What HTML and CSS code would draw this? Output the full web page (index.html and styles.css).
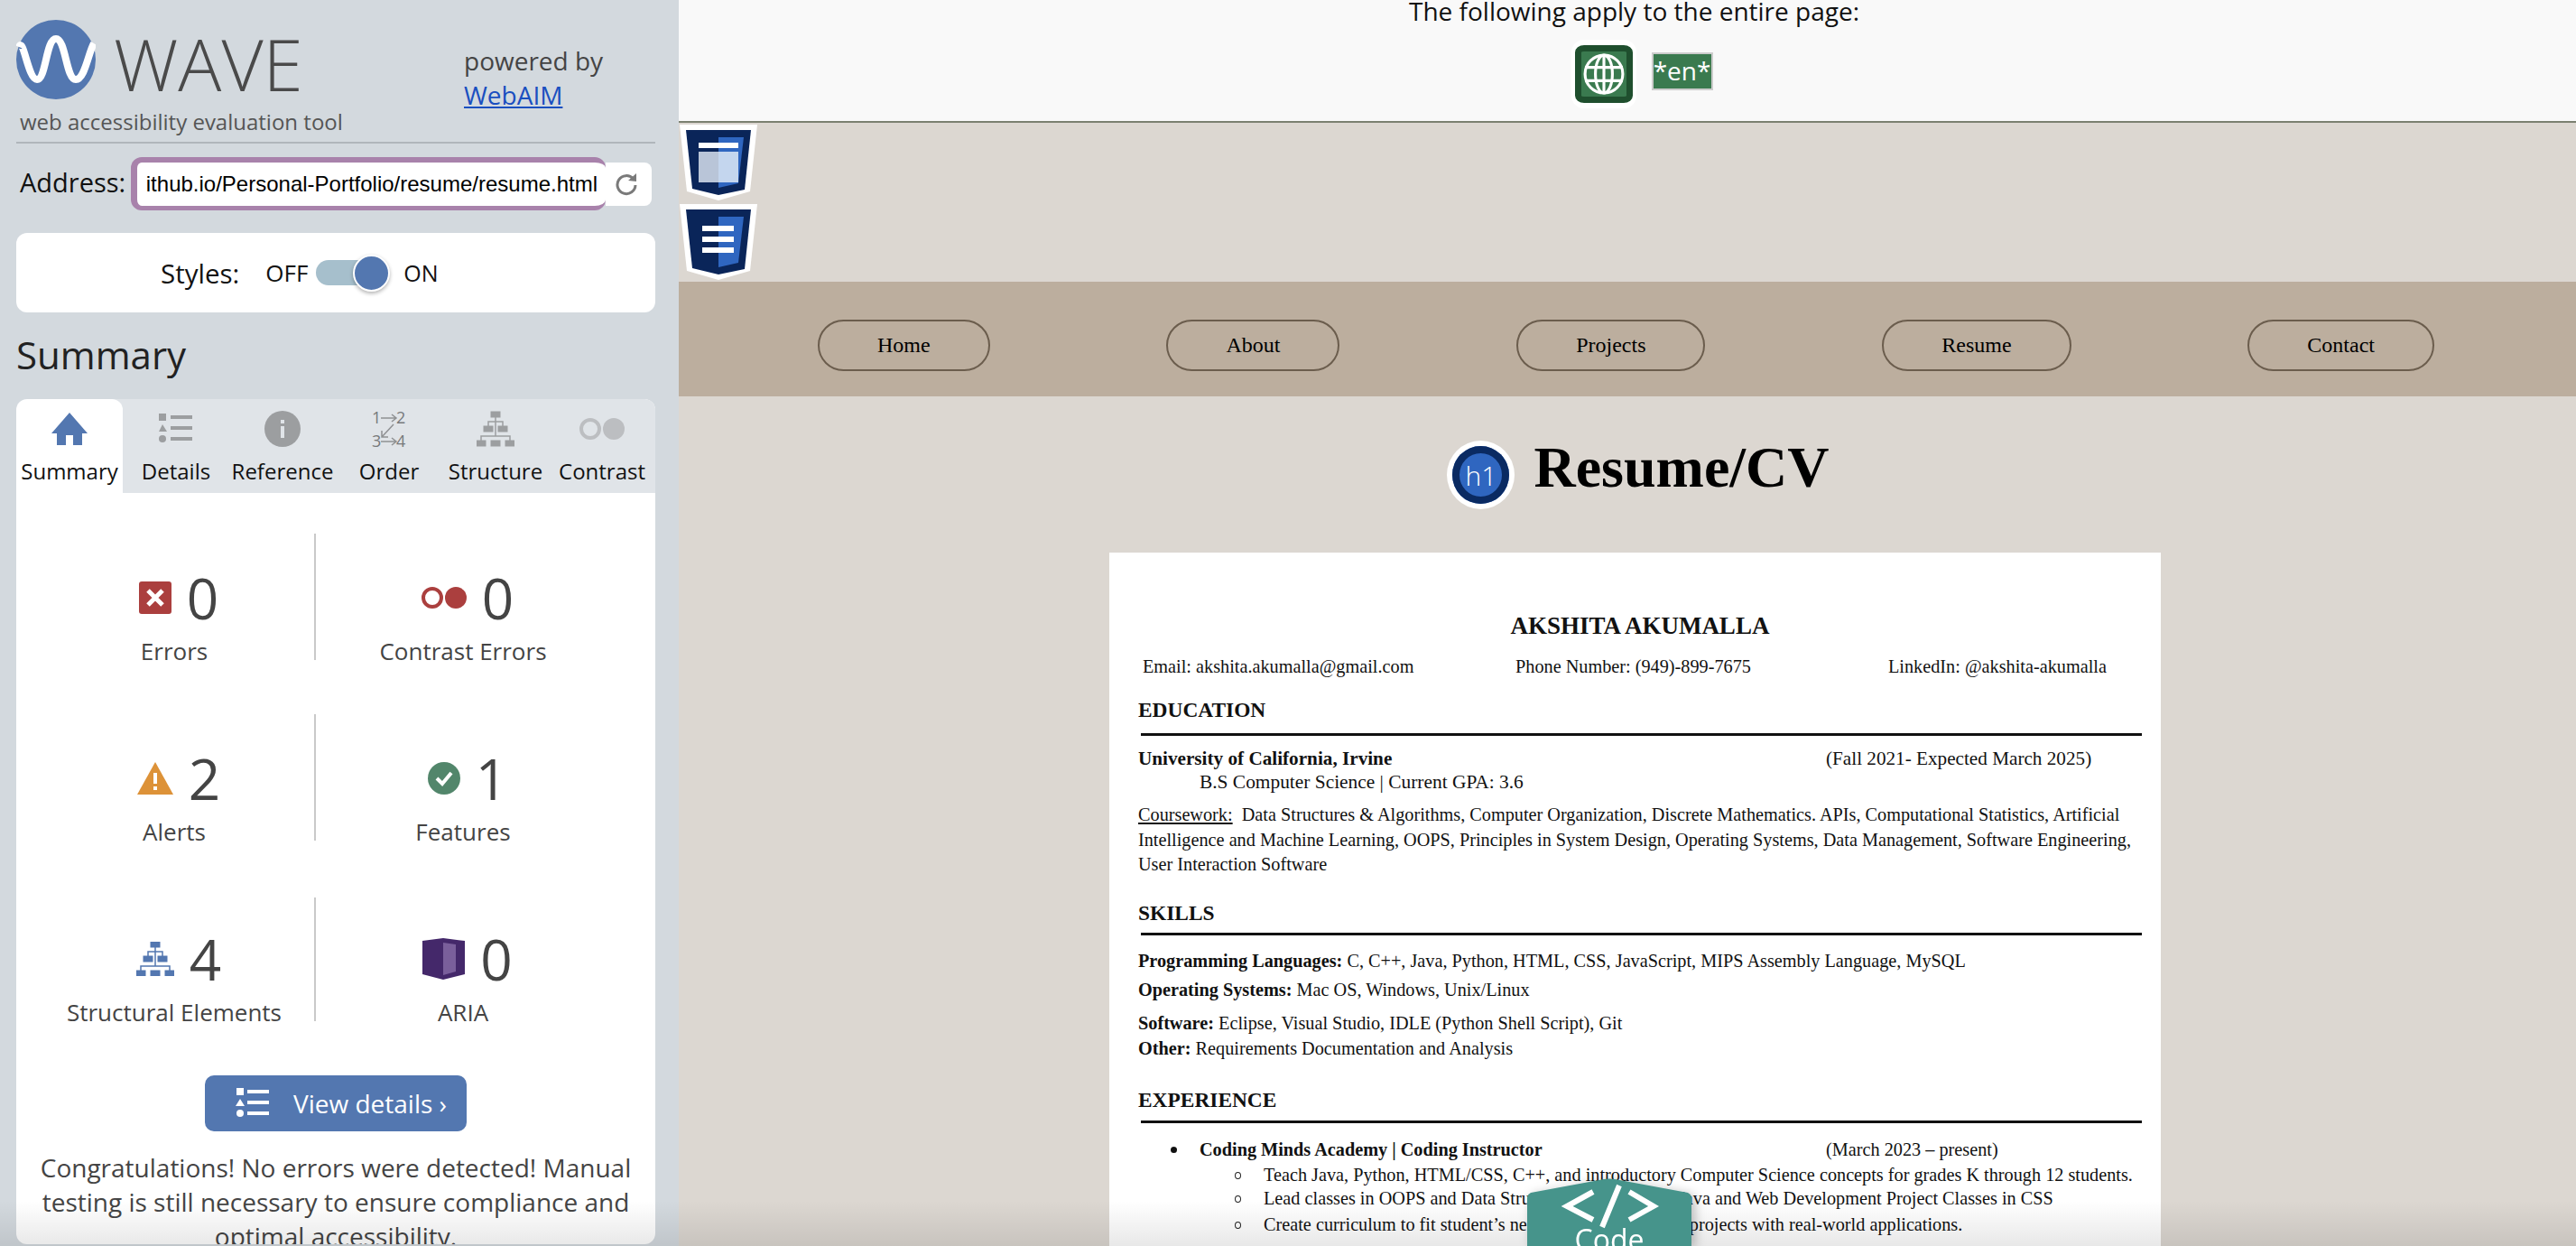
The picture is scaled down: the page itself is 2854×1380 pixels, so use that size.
FILE: index.html
```html
<!DOCTYPE html>
<html lang="en">
<head>
  <meta charset="UTF-8" />
  <title>WAVE Report of Resume/CV</title>
  <link rel="stylesheet" href="styles.css">
</head>
<body>
  <svg class="icon-defs" width="0" height="0">
    <defs>
      <g id="tree">
        <rect x="16" y="0" width="10" height="6"/><rect x="8" y="16" width="10" height="6"/><rect x="24" y="16" width="10" height="6"/>
        <rect x="0" y="32" width="10" height="6"/><rect x="16" y="32" width="10" height="6"/><rect x="32" y="32" width="10" height="6"/>
        <path d="M21 6V11M13 16V11H29V16M21 11V27M5 32V27H37V32" fill="none" stroke-width="1.5"/>
      </g>
    </defs>
  </svg>

  <aside class="sidebar">
    <header class="brand">
      <div>
        <div class="brand-row">
          <svg class="logo" viewBox="0 0 88 88" width="88" height="88">
            <circle cx="44" cy="44" r="44" fill="#5377b0"/>
            <path d="M3 30C8 18 13 66 23 66C33 66 33 21 44 21C55 21 55 66 66 66C76 66 80 36 86 26" fill="none" stroke="#fff" stroke-width="8"/>
          </svg>
          <div class="wave-title">WAVE</div>
        </div>
        <div class="tagline">web accessibility evaluation tool</div>
      </div>
      <div class="powered">powered by<br><a href="#">WebAIM</a></div>
    </header>

    <div class="address">
      <label class="address-label">Address:</label>
      <div class="address-input"><div class="address-clip"><span>akshita-akumalla.github.io/Personal-Portfolio/resume/resume.html</span></div></div>
      <button class="reload" title="Reload">
        <svg viewBox="0 0 26 26" width="26" height="26">
          <path d="M20.5 7A10 10 0 1 0 23 14" fill="none" stroke="#7a7a7a" stroke-width="3"/>
          <path d="M15 9L24 10L24 1Z" fill="#7a7a7a"/>
        </svg>
      </button>
    </div>

    <div class="styles-box">
      <span class="styles-label">Styles:</span>
      <span class="off">OFF</span>
      <span class="toggle"><span class="toggle-knob"></span></span>
      <span class="on">ON</span>
    </div>

    <h2 class="summary-title">Summary</h2>

    <section class="panel">
      <nav class="tabs">
        <div class="tab active">
          <svg viewBox="0 0 40 36" width="40" height="36"><path d="M20 0L40 23H34V36H24V25H16V36H6V23H0Z" fill="#5377b0"/></svg>
          <span>Summary</span>
        </div>
        <div class="tab">
          <svg viewBox="0 0 38 34" width="38" height="34" fill="#9c9ea0"><rect x="0" y="0" width="8" height="8"/><rect x="13" y="2" width="24" height="4"/><path d="M4 12L9 20H0Z"/><rect x="13" y="14" width="24" height="4"/><circle cx="4" cy="28" r="4"/><rect x="13" y="26" width="24" height="4"/></svg>
          <span>Details</span>
        </div>
        <div class="tab">
          <svg viewBox="0 0 40 40" width="40" height="40"><circle cx="20" cy="20" r="20" fill="#9c9ea0"/><rect x="18" y="17" width="4" height="13" fill="#e0e4e8"/><rect x="18" y="10" width="4" height="4" fill="#e0e4e8"/></svg>
          <span>Reference</span>
        </div>
        <div class="tab">
          <svg viewBox="0 0 38 40" width="38" height="40" fill="none" stroke="#8f9193" stroke-width="1.5">
            <text x="0" y="14" class="order-num">1</text><text x="27" y="14" class="order-num">2</text>
            <path d="M10 8H26M22 4L27 8L22 12"/>
            <path d="M24 15L11 29M11 22V29H18"/>
            <text x="0" y="40" class="order-num">3</text><text x="27" y="40" class="order-num">4</text>
            <path d="M10 34H26M22 30L27 34L22 38"/>
          </svg>
          <span>Order</span>
        </div>
        <div class="tab">
          <svg viewBox="0 0 42 38" width="42" height="38"><use href="#tree" fill="#9c9ea0" stroke="#9c9ea0"/></svg>
          <span>Structure</span>
        </div>
        <div class="tab">
          <svg viewBox="0 0 50 24" width="50" height="24"><circle cx="12" cy="12" r="10" fill="none" stroke="#bcbec1" stroke-width="4"/><circle cx="38" cy="12" r="12" fill="#bcbec1"/></svg>
          <span>Contrast</span>
        </div>
      </nav>

      <div class="stats">
        <div class="stat">
          <div class="stat-top">
            <svg viewBox="0 0 36 36" width="36" height="36"><rect width="36" height="36" rx="3" fill="#ab3f3e"/><path d="M10 10L26 26M26 10L10 26" stroke="#fff" stroke-width="5"/></svg>
            <span class="num">0</span>
          </div>
          <div class="stat-label">Errors</div>
        </div>
        <div class="stat">
          <div class="stat-top">
            <svg viewBox="0 0 50 24" width="50" height="24"><circle cx="12" cy="12" r="10" fill="none" stroke="#ab3f3e" stroke-width="4"/><circle cx="38" cy="12" r="12" fill="#ab3f3e"/></svg>
            <span class="num">0</span>
          </div>
          <div class="stat-label">Contrast Errors</div>
        </div>
        <div class="stat">
          <div class="stat-top">
            <svg viewBox="0 0 40 36" width="40" height="36"><path d="M20 0L40 36H0Z" fill="#dd9238"/><rect x="18" y="12" width="4" height="12" fill="#fff"/><rect x="18" y="27" width="4" height="4" fill="#fff"/></svg>
            <span class="num">2</span>
          </div>
          <div class="stat-label">Alerts</div>
        </div>
        <div class="stat">
          <div class="stat-top">
            <svg viewBox="0 0 36 36" width="36" height="36"><circle cx="18" cy="18" r="18" fill="#52866b"/><path d="M10 18L16 24L26 12" fill="none" stroke="#fff" stroke-width="4"/></svg>
            <span class="num">1</span>
          </div>
          <div class="stat-label">Features</div>
        </div>
        <div class="stat stat-last">
          <div class="stat-top">
            <svg viewBox="0 0 42 38" width="42" height="38"><use href="#tree" fill="#5377b0" stroke="#5377b0"/></svg>
            <span class="num">4</span>
          </div>
          <div class="stat-label">Structural Elements</div>
        </div>
        <div class="stat stat-last">
          <div class="stat-top">
            <svg viewBox="0 0 47 46" width="47" height="46"><path d="M0 3L23 0L47 3V40L23 46L0 40Z" fill="#44286a"/><path d="M23 5L37 7V37L23 41Z" fill="#7a5f9b"/></svg>
            <span class="num">0</span>
          </div>
          <div class="stat-label">ARIA</div>
        </div>
      </div>

      <a class="view-details" href="#">
        <svg viewBox="0 0 38 34" width="38" height="34" fill="#fff"><rect x="1" y="0" width="8" height="8"/><rect x="13" y="2" width="24" height="4"/><path d="M5 12L10 20H0Z"/><rect x="13" y="14" width="24" height="4"/><circle cx="5" cy="28" r="4"/><rect x="13" y="26" width="24" height="4"/></svg>
        <span>View details ›</span>
      </a>

      <p class="congrats">Congratulations! No errors were detected! Manual<br>testing is still necessary to ensure compliance and<br>optimal accessibility.</p>
    </section>
  </aside>

  <main class="page">
    <div class="page-notes">
      <div class="notes-title">The following apply to the entire page:</div>
      <div class="notes-icons">
        <span class="globe-badge">
          <svg viewBox="0 0 44 44" width="46" height="46" fill="none" stroke="#fff" stroke-width="3"><circle cx="22" cy="22" r="20"/><ellipse cx="22" cy="22" rx="9" ry="20"/><path d="M22 2V42M2 15H42M2 29H42"/></svg>
        </span>
        <span class="lang-badge">*en*</span>
      </div>
    </div>

    <svg class="shield" viewBox="0 0 86 84" width="86" height="84">
      <path d="M0 0H86L78 74L43 84L8 74Z" fill="#fff"/>
      <path d="M7 6H79L72 72L43 78L14 71Z" fill="#0a2559"/>
      <path d="M43 14H71L65 65L43 70Z" fill="#2f66c0"/>
      <rect x="21" y="20" width="44" height="6" fill="#fff"/>
      <rect x="21" y="30" width="22" height="34" fill="#b9c5d8"/>
      <rect x="43" y="30" width="22" height="34" fill="#c4d6ee"/>
    </svg>
    <svg class="shield shield-next" viewBox="0 0 86 84" width="86" height="84">
      <path d="M0 0H86L78 74L43 84L8 74Z" fill="#fff"/>
      <path d="M7 6H79L72 72L43 78L14 71Z" fill="#0a2559"/>
      <path d="M43 14H71L65 65L43 70Z" fill="#2f66c0"/>
      <rect x="25" y="24" width="35" height="6" fill="#fff"/>
      <rect x="25" y="36" width="35" height="6" fill="#fff"/>
      <rect x="25" y="48" width="35" height="6" fill="#fff"/>
    </svg>

    <nav class="site-nav">
      <a href="#">Home</a>
      <a href="#">About</a>
      <a href="#">Projects</a>
      <a href="#">Resume</a>
      <a href="#">Contact</a>
    </nav>

    <div class="page-heading">
      <span class="h1-badge"><span class="h1-badge-inner">h1</span></span>
      <h1>Resume/CV</h1>
    </div>

    <article class="resume">
      <div class="res-name">AKSHITA AKUMALLA</div>
      <div class="res-contact">
        <span>Email: akshita.akumalla@gmail.com</span>
        <span>Phone Number: (949)-899-7675</span>
        <span>LinkedIn: @akshita-akumalla</span>
      </div>
      <div class="res-head head-edu">EDUCATION</div>
      <div class="res-rule rule-edu"></div>
      <div class="res-line dated school gap-12"><b>University of California, Irvine</b><span>(Fall 2021- Expected March 2025)</span></div>
      <div class="res-line indent">B.S Computer Science | Current GPA: 3.6</div>
      <p class="res-para"><u>Coursework:</u>&nbsp; Data Structures &amp; Algorithms, Computer Organization, Discrete Mathematics. APIs, Computational Statistics, Artificial<br>Intelligence and Machine Learning, OOPS, Principles in System Design, Operating Systems, Data Management, Software Engineering,<br>User Interaction Software</p>
      <div class="res-head head-skills">SKILLS</div>
      <div class="res-rule rule-skills"></div>
      <div class="res-line gap-15"><b>Programming Languages:</b> C, C++, Java, Python, HTML, CSS, JavaScript, MIPS Assembly Language, MySQL</div>
      <div class="res-line gap-6"><b>Operating Systems:</b> Mac OS, Windows, Unix/Linux</div>
      <div class="res-line gap-11"><b>Software:</b> Eclipse, Visual Studio, IDLE (Python Shell Script), Git</div>
      <div class="res-line gap-2"><b>Other:</b> Requirements Documentation and Analysis</div>
      <div class="res-head head-exp">EXPERIENCE</div>
      <div class="res-rule rule-exp"></div>
      <div class="res-line dated job"><b>Coding Minds Academy | Coding Instructor</b><span>(March 2023 – present)</span></div>
      <div class="res-line duty gap-2">Teach Java, Python, HTML/CSS, C++, and introductory Computer Science concepts for grades K through 12 students.</div>
      <div class="res-line duty">Lead classes in OOPS and Data Structures, as well as in Java and Web Development Project Classes in CSS</div>
      <div class="res-line duty gap-3">Create curriculum to fit student’s needs and create unique projects with real-world applications.</div>
    </article>
  </main>

  <div class="bottom-fade"></div>

  <div class="code-tab">
    <svg viewBox="0 0 182 75" width="182" height="75">
      <path d="M0 22Q0 18 4 16L85 1Q91 0 97 1L178 16Q182 18 182 22V75H0Z" fill="#46948b"/>
      <path d="M73 15L44 31L73 46M113 15L140 31L113 46M102 8L83 54" fill="none" stroke="#fff" stroke-width="6"/>
    </svg>
    <span class="code-label">Code</span>
  </div>
</body>
</html>
```

FILE: styles.css
```css
body {
  margin: 0;
  height: 1380px;
  overflow: hidden;
  display: flex;
  position: relative;
  font-family: "Open Sans", sans-serif;
  color: #444;
  background-color: #dcd7d1;
}

.icon-defs {
  position: absolute;
}

/* left panel */
.sidebar {
  width: 752px;
  flex: 0 0 752px;
  height: 1380px;
  background-color: #d3d9de;
}

.brand {
  display: grid;
  grid-template-columns: 496px 1fr;
  height: 159px;
  box-sizing: border-box;
  margin: 0 26px 0 18px;
  border-bottom: 2px solid #b0b6bb;
}

.brand-row {
  display: flex;
  padding-top: 22px;
}

.logo {
  flex: none;
}

.wave-title {
  font-size: 80px;
  font-weight: 300;
  line-height: 88px;
  margin: 4px 0 0 20px;
  color: #4a4a4a;
}

.tagline {
  font-size: 24px;
  line-height: 30px;
  margin: 6px 0 0 4px;
  color: #555;
  white-space: nowrap;
}

.powered {
  font-size: 28px;
  line-height: 38px;
  padding-top: 48px;
}

.powered a {
  color: #1a4fc0;
}

.address {
  display: flex;
  align-items: center;
  margin: 15px 0 0 22px;
}

.address-label {
  width: 123px;
  font-size: 29px;
  color: #111;
  margin-bottom: 5px;
}

.address-input {
  box-sizing: border-box;
  width: 526px;
  height: 59px;
  display: flex;
  align-items: center;
  padding: 0 9px 0 9px;
  background: #fff;
  border: 6px solid #a882ab;
  border-width: 6px 0 5px 7px;
  border-radius: 12px;
  font-family: "Liberation Sans", sans-serif;
  font-size: 24px;
  color: #000;
}

.address-clip {
  flex: 1;
  display: flex;
  justify-content: flex-end;
  overflow: hidden;
  white-space: nowrap;
}

.address-clip span {
  flex: none;
}

.reload {
  width: 51px;
  height: 48px;
  padding: 0 5px 0 0;
  border: none;
  border-radius: 0 8px 8px 0;
  background: #fff;
  display: flex;
  align-items: center;
  justify-content: center;
}

.styles-box {
  display: flex;
  align-items: center;
  height: 88px;
  margin: 25px 26px 0 18px;
  padding-left: 160px;
  background: #fff;
  border-radius: 12px;
  color: #111;
}

.styles-label {
  font-size: 29.5px;
  margin-right: 29px;
}

.off {
  font-size: 26px;
}

.on {
  font-size: 25px;
}

.toggle {
  position: relative;
  width: 82px;
  height: 40px;
  margin: 0 15px 0 9px;
}

.toggle::before {
  content: "";
  position: absolute;
  left: 0;
  top: 6px;
  width: 72px;
  height: 28px;
  border-radius: 14px;
  background: #a6bfcc;
}

.toggle-knob {
  position: absolute;
  right: 0;
  top: 0;
  box-sizing: border-box;
  width: 41px;
  height: 41px;
  border-radius: 50%;
  background: #5377b0;
  border: 2px solid #fff;
  box-shadow: 0 2px 4px rgba(0, 0, 0, 0.3);
}

.summary-title {
  font-size: 42px;
  font-weight: 400;
  line-height: 56px;
  margin: 19px 0 21px 18px;
  color: #222;
}

.panel {
  width: 708px;
  height: 936px;
  margin-left: 18px;
  background: #fff;
  border-radius: 12px;
  overflow: hidden;
}

.tabs {
  display: grid;
  grid-template-columns: repeat(6, 118px);
  height: 104px;
  background: #e0e4e8;
}

.tab {
  display: flex;
  flex-direction: column;
  align-items: center;
  justify-content: flex-start;
  font-size: 24px;
  color: #111;
}

.tab svg {
  height: 44px;
  margin-top: 11px;
}

.tab span {
  line-height: 34px;
  margin-top: 8px;
}

.tab.active {
  background: #fff;
  border-radius: 12px 12px 0 0;
}

.order-num {
  font-family: "Open Sans", sans-serif;
  font-size: 18px;
  fill: #77797b;
  stroke: none;
}

.stats {
  display: grid;
  grid-template-columns: 312px 326px;
  grid-auto-rows: 140px;
  row-gap: 60px;
  margin: 45px 0 0 20px;
}

.stat {
  box-sizing: border-box;
  padding-top: 40px;
  text-align: center;
}

.stat:nth-child(odd) {
  border-right: 2px solid #c9c9c9;
}

.stat-last {
  margin-top: 3px;
  padding-top: 37px;
}

.stat-top {
  display: flex;
  justify-content: center;
  align-items: center;
  gap: 17px;
  height: 62px;
  margin-left: 10px;
}

.num {
  font-size: 62px;
  line-height: 62px;
  font-weight: 400;
  color: #444;
}

.stat-label {
  font-size: 26px;
  line-height: 32px;
  margin-top: 12px;
  color: #444;
  white-space: nowrap;
}

.view-details {
  display: flex;
  align-items: center;
  gap: 26px;
  box-sizing: border-box;
  width: 290px;
  height: 62px;
  margin: 60px 0 0 209px;
  padding-left: 34px;
  border-radius: 10px;
  background: #5377b0;
  color: #fff;
  font-size: 28px;
  text-decoration: none;
}

.congrats {
  margin: 21px 0 0;
  font-size: 28px;
  line-height: 38px;
  text-align: center;
  color: #444;
  white-space: nowrap;
}

/* report area on the right */
.page {
  flex: 1;
  height: 1380px;
  overflow: hidden;
}

.page-notes {
  height: 134px;
  overflow: hidden;
  background: #f9f9f9;
  border-bottom: 2px solid #7b8070;
  text-align: center;
  color: #111;
}

.notes-title {
  font-size: 28px;
  line-height: 40px;
  margin-top: -8px;
  padding: 0 0 0 15px;
}

.notes-icons {
  display: flex;
  justify-content: center;
  align-items: flex-start;
  gap: 17px;
  padding-left: 32px;
  margin-top: 12px;
}

.globe-badge {
  display: flex;
  align-items: center;
  justify-content: center;
  box-sizing: border-box;
  width: 72px;
  height: 76px;
  border: solid #fff;
  border-width: 6px 4px;
  border-radius: 14px;
  background: #3a7a4f;
  box-shadow: inset 0 0 0 7px #1f4f2e;
}

.lang-badge {
  box-sizing: border-box;
  width: 68px;
  height: 42px;
  margin-top: 14px;
  background: #3a7a4f;
  border: 2px solid #ccc;
  color: #fff;
  font-size: 28px;
  line-height: 36px;
}

.shield {
  display: block;
  margin: 2px 0 0 1px;
}

.shield-next {
  margin-top: 4px;
}

.site-nav {
  display: flex;
  justify-content: space-between;
  align-items: center;
  box-sizing: border-box;
  height: 127px;
  margin-top: 2px;
  padding: 13px 157px 0 154px;
  background: #bcae9e;
}

.site-nav a {
  display: block;
  padding: 0 64px;
  border: 2px solid #6b5d4d;
  border-radius: 29px;
  font-family: "Liberation Serif", serif;
  font-size: 24px;
  line-height: 53px;
  color: #000;
  text-decoration: none;
}

.page-heading {
  display: flex;
  justify-content: center;
  align-items: center;
  gap: 21px;
  height: 76px;
  margin-top: 49px;
  padding-left: 24px;
}

.page-heading h1 {
  margin: 0 0 16px;
  font-family: "Liberation Serif", serif;
  font-size: 64px;
  font-weight: bold;
  color: #000;
}

.h1-badge {
  box-sizing: border-box;
  width: 75px;
  height: 76px;
  padding: 6px;
  border-radius: 50%;
  background: #fff;
}

.h1-badge-inner {
  display: block;
  height: 100%;
  border-radius: 50%;
  background: #2f66c0;
  box-shadow: inset 0 0 0 8px #0a2a62;
  color: #fff;
  font-size: 30px;
  line-height: 66px;
  font-weight: 300;
  text-align: center;
}

/* scanned resume */
.resume {
  box-sizing: border-box;
  width: 1165px;
  height: 800px;
  margin: 48px 0 0 477px;
  padding: 67px 21px 0 32px;
  background: #fff;
  font-family: "Liberation Serif", serif;
  font-size: 20.25px;
  color: #111;
  white-space: nowrap;
}

.res-name {
  font-size: 27px;
  font-weight: bold;
  line-height: 28px;
  text-align: center;
}

.res-contact {
  display: grid;
  grid-template-columns: 413px 413px auto;
  margin: 18px 0 0 5px;
  line-height: 26px;
}

.res-head {
  font-size: 23.4px;
  font-weight: bold;
  line-height: 28px;
}

.head-edu { margin-top: 21px; }
.head-skills { margin-top: 25px; }
.head-exp { margin-top: 30px; }

.res-rule {
  height: 3px;
  margin-left: 3px;
  background: #111;
}

.rule-edu { margin-top: 12px; }
.rule-skills { margin-top: 8px; }
.rule-exp { margin-top: 9px; }

.res-line {
  line-height: 26px;
}

.gap-2 { margin-top: 2px; }
.gap-3 { margin-top: 3px; }
.gap-6 { margin-top: 6px; }
.gap-11 { margin-top: 11px; }
.gap-12 { margin-top: 12px; }
.gap-15 { margin-top: 15px; }

.dated {
  display: grid;
  grid-template-columns: 762px auto;
}

.school {
  font-size: 21.2px;
}

.indent {
  padding-left: 68px;
  font-size: 21.4px;
}

.res-para {
  margin: 10px 0 0;
  line-height: 27.5px;
}

.job {
  position: relative;
  margin-top: 16px;
  padding-left: 68px;
  grid-template-columns: 694px auto;
}

.job::before {
  content: "";
  position: absolute;
  left: 36px;
  top: 10px;
  width: 7px;
  height: 7px;
  border-radius: 50%;
  background: #111;
}

.duty {
  position: relative;
  padding-left: 139px;
}

.duty::before {
  content: "";
  position: absolute;
  left: 107px;
  top: 10px;
  box-sizing: border-box;
  width: 7px;
  height: 8px;
  border: 1px solid #222;
  border-radius: 50%;
}

/* page edge overlays */
.bottom-fade {
  position: absolute;
  left: 0;
  right: 0;
  bottom: 0;
  height: 50px;
  background: linear-gradient(rgba(0, 0, 0, 0), rgba(0, 0, 0, 0.09));
  pointer-events: none;
}

.code-tab {
  position: absolute;
  left: 1692px;
  top: 1305px;
  width: 182px;
  height: 75px;
  overflow: visible;
  filter: drop-shadow(4px 2px 6px rgba(0, 0, 0, 0.25));
}

.code-tab svg {
  display: block;
}

.code-label {
  position: absolute;
  left: 0;
  right: 0;
  top: 46px;
  text-align: center;
  color: #fff;
  font-size: 32px;
  line-height: 44px;
}
```
